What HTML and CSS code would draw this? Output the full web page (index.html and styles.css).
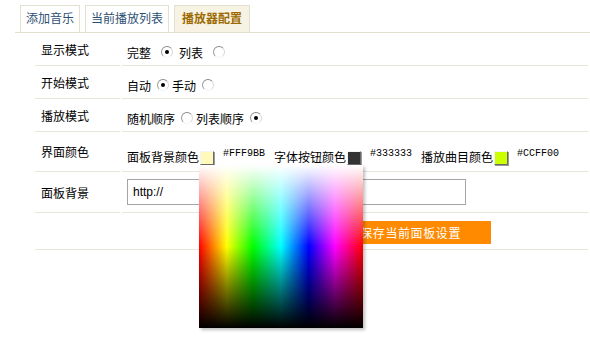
FILE: index.html
```html
<!DOCTYPE html>
<html>
<head>
    <meta charset="utf-8">
    <link rel="stylesheet" href="styles.css">
</head>
<body>
    <div class="tabs">
        <div class="tab">添加音乐</div>
        <div class="tab">当前播放列表</div>
        <div class="tab active">播放器配置</div>
    </div>

    <div class="config">
        <div class="label r1">显示模式</div>
        <div class="value r1 texty">完整 <span class="radio on"></span> 列表 <span class="radio"></span></div>

        <div class="label r2">开始模式</div>
        <div class="value r2 texty">自动<span class="radio on"></span>手动<span class="radio"></span></div>

        <div class="label r3">播放模式</div>
        <div class="value r3 texty">随机顺序<span class="radio"></span>列表顺序<span class="radio on"></span></div>

        <div class="label r4">界面颜色</div>
        <div class="value r4 colors">
            <span class="pick">面板背景颜色<span class="swatch sw-bg"></span><span class="hex">#FFF9BB</span></span>
            <span class="pick">字体按钮颜色<span class="swatch sw-font"></span><span class="hex">#333333</span></span>
            <span class="pick">播放曲目颜色<span class="swatch sw-song"></span><span class="hex">#CCFF00</span></span>
        </div>

        <div class="label r5">面板背景</div>
        <div class="value r5"><input class="url" type="text" value="http://"></div>

        <div class="label r6"></div>
        <div class="value r6"><button class="save">保存当前面板设置</button></div>
    </div>

    <!-- colour picker popup, open over the form -->
    <div class="picker"></div>
</body>
</html>
```

FILE: styles.css
```css
* {
    margin: 0;
    padding: 0;
    box-sizing: border-box;
}
body {
    background: #fff;
    color: #000;
    font-family: "Liberation Sans", "Noto Sans CJK SC", sans-serif;
    font-size: 12px;
}
.tabs {
    display: flex;
    gap: 5px;
    margin-left: 15px;
    padding: 5px 0 0 5px;
    height: 33px;
    border-bottom: 1px solid #e4e0d0;
}
.tab {
    height: 27px;
    padding: 0 5px;
    line-height: 26px;
    border: 1px solid #e4e0d0;
    border-bottom: none;
    color: #2d4f74;
    background: #fff;
}
.tab.active {
    padding: 0 7px;
    color: #9c6a00;
    font-weight: bold;
    background: #f7f3e4;
}
.config {
    display: grid;
    grid-template-columns: 85px 1fr;
    column-gap: 2px;
    margin: 0 2px 0 35px;
}
.label, .value {
    display: flex;
    align-items: center;
    border-bottom: 1px solid #e8e5da;
}
.label {
    padding-left: 6px;
}
.value {
    padding-left: 5px;
}
.texty {
    padding-top: 6px;
}
.r1, .r2, .r3 { height: 33px; }
.r4 { height: 40px; }
.r5 { height: 41px; }
.r6 { height: 37px; }
.radio {
    display: inline-block;
    width: 12px;
    height: 12px;
    margin: 0 3px 0 6px;
    border-radius: 50%;
    border: 1px solid;
    border-color: #8a8a8a #d8d8d8 #f4f4f4 #9a9a9a;
    background: #fff;
    position: relative;
}
.radio.on::after {
    content: "";
    position: absolute;
    left: 3px;
    top: 3px;
    width: 4px;
    height: 4px;
    border-radius: 50%;
    background: #000;
}
.r1 .radio {
    margin: 0 6px 0 10px;
}
.colors {
    padding-top: 10px;
    gap: 9px;
}
.pick {
    display: flex;
    align-items: flex-end;
    white-space: nowrap;
}
.swatch {
    display: inline-block;
    width: 14px;
    height: 14px;
    margin: 0 9px 0 1px;
    border: 1px solid;
    border-color: #f4f4f4 #6a6a6a #6a6a6a #f4f4f4;
    box-shadow: 1px 1px 0 #9a9a9a;
}
.sw-bg { background: #fff9bb; }
.sw-font { background: #333333; }
.sw-song { background: #ccff00; }
.hex {
    align-self: flex-start;
    margin-top: 1px;
    font-family: "Liberation Mono", monospace;
    font-size: 10px;
    line-height: 10px;
}
.url {
    width: 339px;
    height: 26px;
    margin-top: -1px;
    padding-left: 5px;
    border: 1px solid #a5a5a5;
    font-family: "Liberation Sans", sans-serif;
    font-size: 12px;
    color: #000;
    outline: none;
}
.r6 {
    justify-content: flex-end;
    padding-right: 97px;
}
.save {
    width: 170px;
    height: 23px;
    margin-top: 2px;
    padding-right: 30px;
    border: none;
    background: #ff8a00;
    color: #fff;
    text-align: right;
    font-family: "Noto Sans CJK SC", sans-serif;
    font-size: 12px;
    letter-spacing: 0.6px;
}
.picker {
    position: absolute;
    left: 199px;
    top: 165px;
    width: 164px;
    height: 163px;
    background:
        linear-gradient(to bottom, #fff 0%, rgba(255,255,255,0) 50%, rgba(0,0,0,0) 50%, #000 100%),
        linear-gradient(to right, #f00 0%, #ff0 17%, #0f0 33%, #0ff 50%, #00f 67%, #f0f 83%, #f00 100%);
    box-shadow: 2px 2px 3px rgba(0,0,0,0.25);
}
```
